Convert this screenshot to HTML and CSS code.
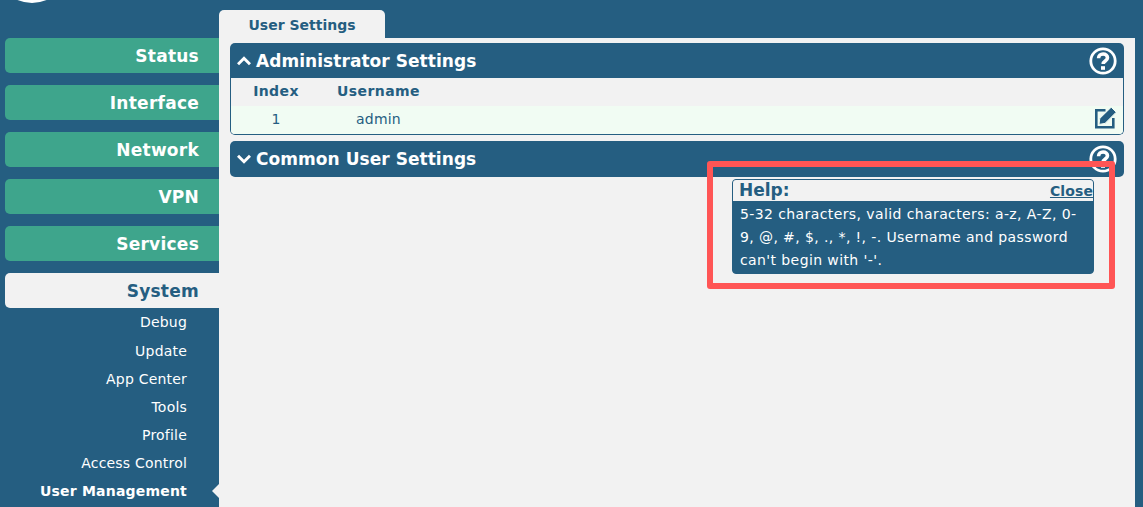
FILE: index.html
```html
<!DOCTYPE html>
<html lang="en">
<head>
<meta charset="utf-8">
<title>User Settings</title>
<link rel="stylesheet" href="styles.css">
</head>
<body>
<div class="page">
  <aside class="sidebar">
    <div class="logo-strip"><span class="logo"></span></div>
    <nav class="nav">
      <a class="nav-item">Status</a>
      <a class="nav-item">Interface</a>
      <a class="nav-item">Network</a>
      <a class="nav-item">VPN</a>
      <a class="nav-item">Services</a>
      <a class="nav-item active">System</a>
    </nav>
    <ul class="subnav">
      <li>Debug</li>
      <li>Update</li>
      <li>App Center</li>
      <li>Tools</li>
      <li>Profile</li>
      <li>Access Control</li>
      <li class="current">User Management</li>
    </ul>
  </aside>
  <main class="main">
    <div class="tabs"><div class="tab">User Settings</div></div>
    <div class="content">
      <section class="panel">
        <header class="panel-head">
          <svg class="chev" viewBox="0 0 14 10"><path d="M1 8.300 7 2.300 13 8.300" /></svg>
          <h2>Administrator Settings</h2>
          <svg class="help-icon" viewBox="0 0 28 28"><circle cx="14" cy="14" r="12.200"/><path d="M9.600 11.200c0-2.700 2-4.200 4.500-4.200s4.400 1.500 4.400 3.800c0 3.300-4.300 3.200-4.300 6.200"/><rect class="dot" x="12" y="19.200" width="4" height="3.600"/></svg>
        </header>
        <div class="panel-body">
          <div class="row head"><span class="c-index">Index</span><span class="c-user">Username</span></div>
          <div class="row data"><span class="c-index">1</span><span class="c-user">admin</span>
            <svg class="edit" viewBox="0 0 22 22"><path class="box" d="M11.500 3.300H2.300v17h17V11"/><path class="pen" d="M17.200.2 22.200 5.200 11 16.400 5 17.400 5.800 11.400z"/></svg>
          </div>
        </div>
      </section>
      <section class="panel">
        <header class="panel-head">
          <svg class="chev" viewBox="0 0 14 10"><path d="M1 1.700 7 7.700l6-6" /></svg>
          <h2>Common User Settings</h2>
          <svg class="help-icon" viewBox="0 0 28 28"><circle cx="14" cy="14" r="12.200"/><path d="M9.600 11.200c0-2.700 2-4.200 4.500-4.200s4.400 1.500 4.400 3.800c0 3.300-4.300 3.200-4.300 6.200"/><rect class="dot" x="12" y="19.200" width="4" height="3.600"/></svg>
        </header>
      </section>
      <aside class="help">
        <div class="help-head"><strong>Help:</strong><a class="close">Close</a></div>
        <p>5-32 characters, valid characters: a-z, A-Z, 0-9, @, #, $, ., *, !, -. Username and password can't begin with '-'.</p>
      </aside>
      <div class="callout"></div>
    </div>
  </main>
  <div class="right-edge"></div>
</div>
</body>
</html>
```
FILE: styles.css
```css
* { box-sizing: border-box; }
html, body { margin: 0; height: 100%; }
body {
  background: #255e81;
  font-family: "DejaVu Sans", Verdana, sans-serif;
  overflow: hidden;
}
.page { display: flex; height: 507px; overflow: hidden; }

.sidebar { width: 219px; flex: none; padding-left: 5px; }
.logo-strip { height: 38px; position: relative; overflow: hidden; margin-left: -5px; }
.logo {
  position: absolute; left: -4px; top: -69px;
  width: 72px; height: 72px; border-radius: 50%; background: #fff;
}
.nav { display: flex; flex-direction: column; gap: 12px; }
.nav-item {
  display: block; height: 35px; line-height: 37px;
  background: #3ea58c; color: #fff;
  font-size: 17px; font-weight: 700; text-align: right;
  letter-spacing: 0.25px;
  padding-right: 20px; border-radius: 5px 0 0 5px;
}
.nav-item.active { background: #f2f2f2; color: #255e81; }
.subnav { list-style: none; margin: 0; padding: 0; }
.subnav li {
  height: 28px; line-height: 28px; text-align: right;
  padding-right: 32px; color: #fff; font-size: 14px; position: relative;
  letter-spacing: 0.2px;
}
.subnav li:first-child { margin-top: 0; height: 28.500px; }
.subnav li.current { font-weight: 700; }
.subnav li.current::after {
  content: ""; position: absolute; right: 0; top: 7px;
  border: 7px solid transparent; border-left: 0; border-right-color: #f2f2f2;
}

.main { flex: 0 0 916px; display: flex; flex-direction: column; }
.tabs { height: 38px; padding-top: 10px; }
.tab {
  width: 166px; height: 28px; line-height: 30px; text-align: center;
  background: #f2f2f2; color: #255e81; font-size: 14px; font-weight: 700;
  border-radius: 5px 5px 0 0;
}
.content {
  flex: 1; background: #f2f2f2; position: relative;
  padding: 5px 11px 0;
  display: flex; flex-direction: column; gap: 6px;
}
.panel { border-radius: 5px; }
.panel-head {
  height: 35px; background: #255e81; color: #fff;
  border-radius: 5px 5px 0 0; position: relative;
  display: flex; align-items: center; padding-left: 7px; gap: 5px;
}
.panel + .panel .panel-head { height: 36px; border-radius: 5px; }
.panel-head h2 { margin: 0; font-size: 17px; font-weight: 700; letter-spacing: 0.05px; }
.chev { width: 14px; height: 10px; flex: none; }
.chev path { fill: none; stroke: #fff; stroke-width: 3; }
.help-icon { position: absolute; right: 7px; top: 4px; width: 28px; height: 28px; }
.help-icon circle, .help-icon path { fill: none; stroke: #fff; }
.help-icon circle { stroke-width: 2.800; }
.help-icon path { stroke-width: 3.600; }
.help-icon .dot { fill: #fff; }

.panel-body {
  height: 57px; border: 1px solid #255e81; border-top: 0;
  border-radius: 0 0 5px 5px; overflow: hidden;
}
.row { display: flex; height: 28px; line-height: 27px; font-size: 14px; color: #255e81; position: relative; letter-spacing: 0.2px; }
.row.head { font-weight: 700; letter-spacing: 0.4px; }
.row.data { background: #f1fcf3; height: 28px; font-size: 14px; line-height: 26px; }
.c-index { width: 90px; text-align: center; }
.c-user { width: 115px; text-align: center; }
.edit { position: absolute; right: 7px; top: 1px; width: 22px; height: 22px; }
.edit .box { fill: none; stroke: #255e81; stroke-width: 2.600; }
.edit .pen { fill: #255e81; stroke: #f1fcf3; stroke-width: 1; }

.help {
  position: absolute; left: 513px; top: 141px; width: 362px; height: 95px;
  background: #255e81; border: 1px solid #255e81; border-radius: 4px;
  overflow: hidden; color: #fff;
}
.help-head {
  height: 21px; background: #f2f2f2; color: #255e81;
  display: flex; justify-content: space-between; align-items: center;
  padding-left: 6px;
}
.help-head strong { font-size: 17px; line-height: 25px; }
.close { font-size: 14px; font-weight: 700; text-decoration: underline; letter-spacing: 0.1px; }
.help p {
  margin: 0; padding: 2px 4px 0 7px; font-size: 14px; line-height: 23px;
  letter-spacing: 0.4px;
}
.callout {
  position: absolute; left: 488px; top: 123px; width: 408px; height: 128px;
  border: 6px solid #ff5555; border-radius: 3px;
}
.right-edge { flex: 1; }
```
